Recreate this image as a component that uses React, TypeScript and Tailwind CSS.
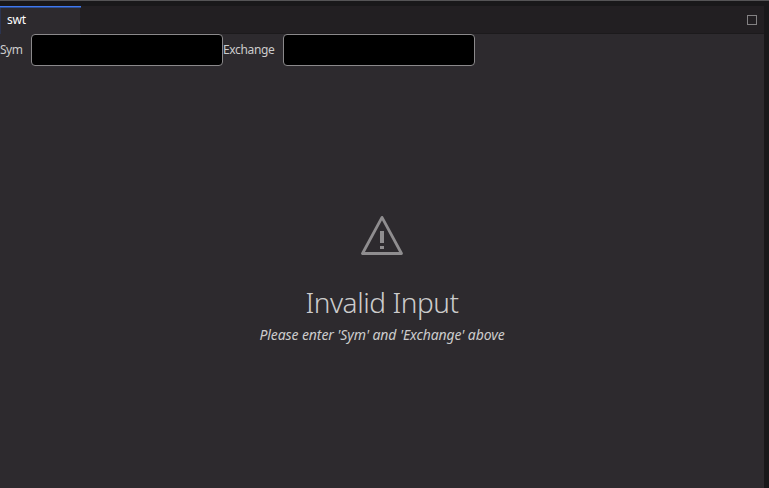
const inputClass =
  "h-8 w-48 rounded border border-[#8b898b] bg-black px-2 text-xs text-[#cccccc] outline-none";

function Field({ label, labelClass }: { label: string; labelClass: string }) {
  return (
    <label className="flex items-center">
      <span className={`shrink-0 whitespace-nowrap text-[12px] leading-4 text-[#cccccc] ${labelClass}`}>
        {label}
      </span>
      <input className={inputClass} />
    </label>
  );
}

function WarningIcon() {
  return (
    <svg width="42" height="40" viewBox="0 0 42 40" fill="none" className="text-[#8f8d8f]">
      <path d="M21 1.4L1.5 37.5H40.5Z" stroke="currentColor" strokeWidth="2.8" strokeLinejoin="round" />
      <path d="M19 15h4v12h-4zM19 30h4v3h-4z" fill="currentColor" />
    </svg>
  );
}

export default function App() {
  return (
    <div className="flex h-[488px] w-[769px] flex-col overflow-hidden border-t border-[#555456] bg-[#19181a] pt-[5px] font-['Noto_Sans',sans-serif]">
      <main className="flex w-[764px] flex-1 flex-col bg-[#2d2a2e]">
        <header className="flex h-7 items-stretch justify-between border-b border-[#1c1a1c] bg-[#221f22]">
          <div className="flex w-[81px] flex-col">
            <div className="h-px shrink-0 bg-[#4078f0]" />
            <div className="h-px shrink-0 bg-[#2f4f90]" />
            <div className="-mb-px flex flex-1 border-l border-r border-l-[#2c3450] border-r-[#221f22] bg-[#2d2a2e]">
              <span className="pl-[6px] pt-1 text-[12px] leading-4 tracking-[-0.2px] text-white">swt</span>
            </div>
          </div>
          <button aria-label="Maximize" className="mr-[7px] mt-[9px] size-[10px] border border-[#838183]" />
        </header>
        <div className="flex">
          <Field label="Sym" labelClass="w-[31px] tracking-[-0.5px]" />
          <Field label="Exchange" labelClass="w-[60px] tracking-[-0.35px]" />
        </div>
        <section className="flex flex-col items-center pt-[150px]">
          <WarningIcon />
          <h1 className="mt-[28px] whitespace-nowrap text-[28px] font-light leading-9 tracking-[-0.45px] text-[#cccccc]">
            Invalid Input
          </h1>
          <p className="mt-[5px] whitespace-nowrap text-[14px] italic leading-5 tracking-[-0.09px] text-[#cccccc]">
            Please enter 'Sym' and 'Exchange' above
          </p>
        </section>
      </main>
    </div>
  );
}
